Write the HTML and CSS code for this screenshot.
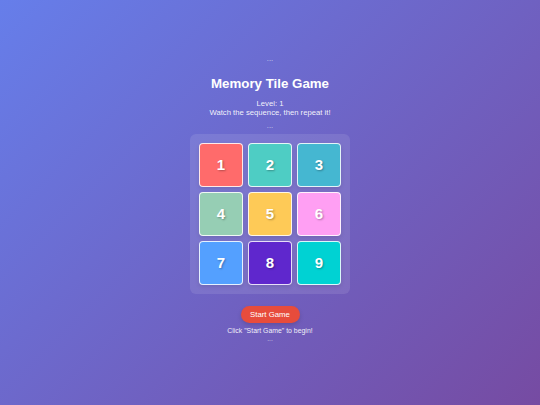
FILE: index.html
```html
<!DOCTYPE html>
<html lang="en">
<head>
<meta charset="utf-8">
<title>Memory Tile Game</title>
<link rel="stylesheet" href="styles.css">
</head>
<body>
<main class="game">
  <div class="dots dots-top">...</div>
  <h1 class="title">Memory Tile Game</h1>
  <div class="info">
    <div class="line">Level: 1</div>
    <div class="line">Watch the sequence, then repeat it!</div>
  </div>
  <div class="dots dots-mid">...</div>
  <div class="board">
    <div class="tile t1">1</div>
    <div class="tile t2">2</div>
    <div class="tile t3">3</div>
    <div class="tile t4">4</div>
    <div class="tile t5">5</div>
    <div class="tile t6">6</div>
    <div class="tile t7">7</div>
    <div class="tile t8">8</div>
    <div class="tile t9">9</div>
  </div>
  <button class="start">Start Game</button>
  <div class="hint">Click "Start Game" to begin!</div>
  <div class="dots dots-bottom">...</div>
</main>
</body>
</html>
```
FILE: styles.css
```css
html, body {
  margin: 0;
  padding: 0;
}
body {
  width: 540px;
  height: 405px;
  overflow: hidden;
  background: linear-gradient(135deg, #667eea 0%, #764ba2 100%);
  font-family: "Liberation Sans", Arial, sans-serif;
  color: #fff;
}
.game {
  display: flex;
  flex-direction: column;
  align-items: center;
  padding-top: 55px;
}
.dots {
  font-size: 7.5px;
  line-height: 8px;
  height: 8px;
  color: rgba(255, 255, 255, 0.7);
}
.title {
  margin: 12.7px 0 0;
  font-size: 13.3px;
  line-height: 16px;
  font-weight: bold;
}
.info {
  margin-top: 7.7px;
  display: flex;
  flex-direction: column;
  align-items: center;
}
.line {
  font-size: 7.7px;
  line-height: 9px;
  color: rgba(255, 255, 255, 0.92);
}
.dots-mid {
  margin-top: 4.3px;
}
.board {
  margin-top: 4.3px;
  box-sizing: border-box;
  width: 160px;
  height: 160px;
  padding: 9px;
  display: grid;
  grid-template-columns: repeat(3, 44px);
  grid-template-rows: repeat(3, 44px);
  gap: 5px;
  background: rgba(255, 255, 255, 0.1);
  border-radius: 6px;
}
.tile {
  box-sizing: border-box;
  border: 1.5px solid rgba(255, 255, 255, 0.85);
  border-radius: 4px;
  display: flex;
  align-items: center;
  justify-content: center;
  font-size: 15px;
  font-weight: bold;
  color: #fff;
  text-shadow: 1px 1px 2px rgba(0, 0, 0, 0.3);
  box-shadow: 0 2px 4px rgba(0, 0, 0, 0.1);
}
.t1 { background: #ff6b6b; }
.t2 { background: #4ecdc4; }
.t3 { background: #45b7d1; }
.t4 { background: #96ceb4; }
.t5 { background: #feca57; }
.t6 { background: #ff9ff3; }
.t7 { background: #54a0ff; }
.t8 { background: #5f27cd; }
.t9 { background: #00d2d3; }
.start {
  margin-top: 12.5px;
  width: 59px;
  height: 17px;
  padding: 0;
  border: none;
  border-radius: 9px;
  background: #e74c3c;
  color: #fff;
  font-family: "Liberation Sans", Arial, sans-serif;
  font-size: 7.8px;
  line-height: 17px;
  box-shadow: 0 2px 4px rgba(0, 0, 0, 0.15);
}
.hint {
  margin-top: 4px;
  font-size: 6.9px;
  line-height: 7px;
  color: rgba(255, 255, 255, 0.92);
}
.dots-bottom {
  margin-top: 2.7px;
  font-size: 6.5px;
  line-height: 4px;
  height: 4px;
}
```
